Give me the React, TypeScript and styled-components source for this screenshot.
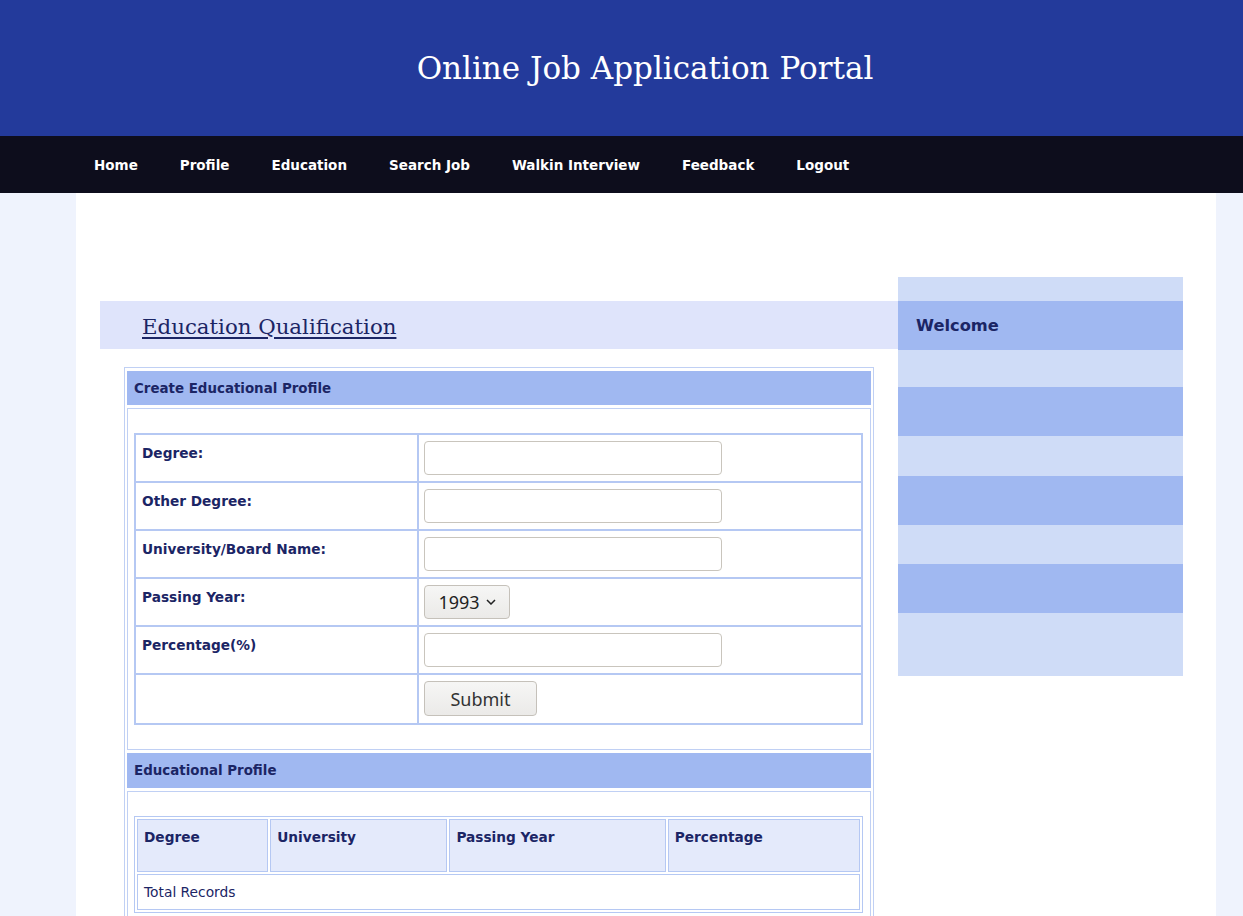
import React from "react";
import styled, { createGlobalStyle } from "styled-components";

const GlobalStyle = createGlobalStyle`
  body {
    margin: 0;
    background: #eff3fd;
    font-family: "DejaVu Sans", Verdana, sans-serif;
    color: #1b2565;
  }
`;

const Header = styled.header`
  height: 136px;
  background: #233a9b;
  display: flex;
  align-items: center;
  justify-content: center;
`;

const SiteTitle = styled.h1`
  margin: 0;
  padding-left: 47px;
  font-family: "DejaVu Serif", Georgia, serif;
  font-weight: normal;
  font-size: 31px;
  color: #ffffff;
`;

const NavBar = styled.nav`
  height: 57px;
  background: #0d0d1c;
`;

const NavInner = styled.ul`
  width: 1140px;
  height: 100%;
  margin: 0 0 0 76px;
  padding: 0 0 0 18px;
  box-sizing: border-box;
  list-style: none;
  display: flex;
  align-items: center;
  gap: 42px;
`;

const NavLink = styled.li`
  font-size: 13.5px;
  font-weight: bold;
  color: #ffffff;
`;

const Page = styled.div`
  width: 1140px;
  margin: 0 0 0 76px;
  min-height: 723px;
  padding: 84px 33px 0 24px;
  box-sizing: border-box;
  background: #ffffff;
  display: flex;
  align-items: flex-start;
`;

const Main = styled.main`
  width: 798px;
  padding-top: 24px;
`;

const PageHeading = styled.div`
  height: 48px;
  background: #dfe4fb;
  padding-left: 42px;
  display: flex;
  align-items: center;
`;

const HeadingText = styled.h2`
  margin: 2px 0 0;
  font-family: "DejaVu Serif", Georgia, serif;
  font-weight: normal;
  font-size: 21.3px;
  text-decoration: underline;
  text-underline-offset: 3px;
  color: #1b2565;
`;

const Panel = styled.div`
  margin: 18px 24px 0;
  border: 1px solid #c0d0f4;
  padding: 3px 2px 2px;
  display: flex;
  flex-direction: column;
  gap: 3px;
`;

const SectionHeader = styled.div<{ $h?: number }>`
  height: ${(p) => p.$h ?? 34}px;
  background: #a0b8f1;
  padding-left: 7px;
  display: flex;
  align-items: center;
  font-size: 13.4px;
  font-weight: bold;
`;

const SectionBody = styled.div<{ $bottom?: number }>`
  border: 1px solid #c0d0f4;
  padding: 24px 7px ${(p) => p.$bottom ?? 24}px 6px;
`;

const FormGrid = styled.div`
  display: grid;
  grid-template-columns: 283px 1fr;
  border: 2px solid #b5c8f3;
  border-bottom: none;
  border-right: none;
`;

const LabelCell = styled.div<{ $extra?: number }>`
  border-right: 2px solid #b5c8f3;
  border-bottom: 2px solid #b5c8f3;
  padding: 10px 0 0 6px;
  height: ${(p) => 36 + (p.$extra ?? 0)}px;
  font-size: 13.7px;
  font-weight: bold;
`;

const FieldCell = styled.div<{ $extra?: number }>`
  border-right: 2px solid #b5c8f3;
  border-bottom: 2px solid #b5c8f3;
  padding: 6px 5px 0;
  height: ${(p) => 40 + (p.$extra ?? 0)}px;
`;

const TextInput = styled.input`
  width: 298px;
  height: 34px;
  box-sizing: border-box;
  border: 1px solid #c9c5bd;
  border-radius: 4px;
  background: #ffffff;
`;

const YearSelect = styled.div`
  width: 86px;
  height: 34px;
  box-sizing: border-box;
  border: 1px solid #c5c1ba;
  border-radius: 4px;
  background: linear-gradient(#f6f6f5, #ebeae8);
  display: flex;
  align-items: center;
  justify-content: center;
  gap: 6px;
  font-family: "Noto Sans", "DejaVu Sans", sans-serif;
  font-size: 18px;
  color: #222;
`;

const SubmitButton = styled.button`
  width: 113px;
  height: 35px;
  border: 1px solid #c5c1ba;
  border-radius: 4px;
  background: linear-gradient(#f6f6f5, #ebeae8);
  font-family: "Noto Sans", "DejaVu Sans", sans-serif;
  font-size: 18px;
  color: #333;
`;

const DataTable = styled.table`
  width: 100%;
  table-layout: fixed;
  border: 1px solid #b5c8f3;
  border-spacing: 2px;
`;

const HeadCell = styled.th<{ $w: number }>`
  box-sizing: border-box;
  width: ${(p) => p.$w}px;
  height: 53px;
  background: #e4eafb;
  border: 1px solid #b5c8f3;
  text-align: left;
  vertical-align: top;
  padding: 9px 6px 0;
  font-size: 13.7px;
  font-weight: bold;
`;

const FootCell = styled.td`
  height: 34px;
  border: 1px solid #b5c8f3;
  padding: 0 6px;
  font-size: 13.8px;
`;

const Sidebar = styled.aside`
  width: 285px;
  background: #cfdcf7;
  padding: 24px 0 63px;
  display: flex;
  flex-direction: column;
`;

const SideItem = styled.div<{ $gap: number }>`
  height: 49px;
  margin-bottom: ${(p) => p.$gap}px;
  background: #a0b8f1;
  padding-left: 18px;
  display: flex;
  align-items: center;
  font-size: 16.3px;
  font-weight: bold;
  &:last-child {
    margin-bottom: 0;
  }
`;

const navItems = ["Home", "Profile", "Education", "Search Job", "Walkin Interview", "Feedback", "Logout"];

const fields = ["Degree:", "Other Degree:", "University/Board Name:"];

export default function App() {
  return (
    <>
      <GlobalStyle />
      <Header>
        <SiteTitle>Online Job Application Portal</SiteTitle>
      </Header>
      <NavBar>
        <NavInner>
          {navItems.map((item) => (
            <NavLink key={item}>{item}</NavLink>
          ))}
        </NavInner>
      </NavBar>
      <Page>
        <Main>
          <PageHeading>
            <HeadingText>Education Qualification</HeadingText>
          </PageHeading>
          <Panel>
            <SectionHeader>Create Educational Profile</SectionHeader>
            <SectionBody>
              <FormGrid>
                {fields.map((f) => (
                  <React.Fragment key={f}>
                    <LabelCell>{f}</LabelCell>
                    <FieldCell>
                      <TextInput />
                    </FieldCell>
                  </React.Fragment>
                ))}
                <LabelCell>Passing Year:</LabelCell>
                <FieldCell>
                  <YearSelect>
                    1993
                    <svg width="10" height="6" viewBox="0 0 10 6">
                      <path d="M1 1l4 4 4-4" fill="none" stroke="#222" strokeWidth="1.5" />
                    </svg>
                  </YearSelect>
                </FieldCell>
                <LabelCell>Percentage(%)</LabelCell>
                <FieldCell>
                  <TextInput />
                </FieldCell>
                <LabelCell $extra={2} />
                <FieldCell $extra={2}>
                  <SubmitButton>Submit</SubmitButton>
                </FieldCell>
              </FormGrid>
            </SectionBody>
            <SectionHeader $h={35}>Educational Profile</SectionHeader>
            <SectionBody $bottom={20}>
              <DataTable>
                <thead>
                  <tr>
                    <HeadCell $w={131}>Degree</HeadCell>
                    <HeadCell $w={177}>University</HeadCell>
                    <HeadCell $w={216}>Passing Year</HeadCell>
                    <HeadCell $w={192}>Percentage</HeadCell>
                  </tr>
                </thead>
                <tbody>
                  <tr>
                    <FootCell colSpan={4}>Total Records</FootCell>
                  </tr>
                </tbody>
              </DataTable>
            </SectionBody>
          </Panel>
        </Main>
        <Sidebar>
          <SideItem $gap={37}>Welcome</SideItem>
          <SideItem $gap={40} />
          <SideItem $gap={39} />
          <SideItem $gap={0} />
        </Sidebar>
      </Page>
    </>
  );
}
